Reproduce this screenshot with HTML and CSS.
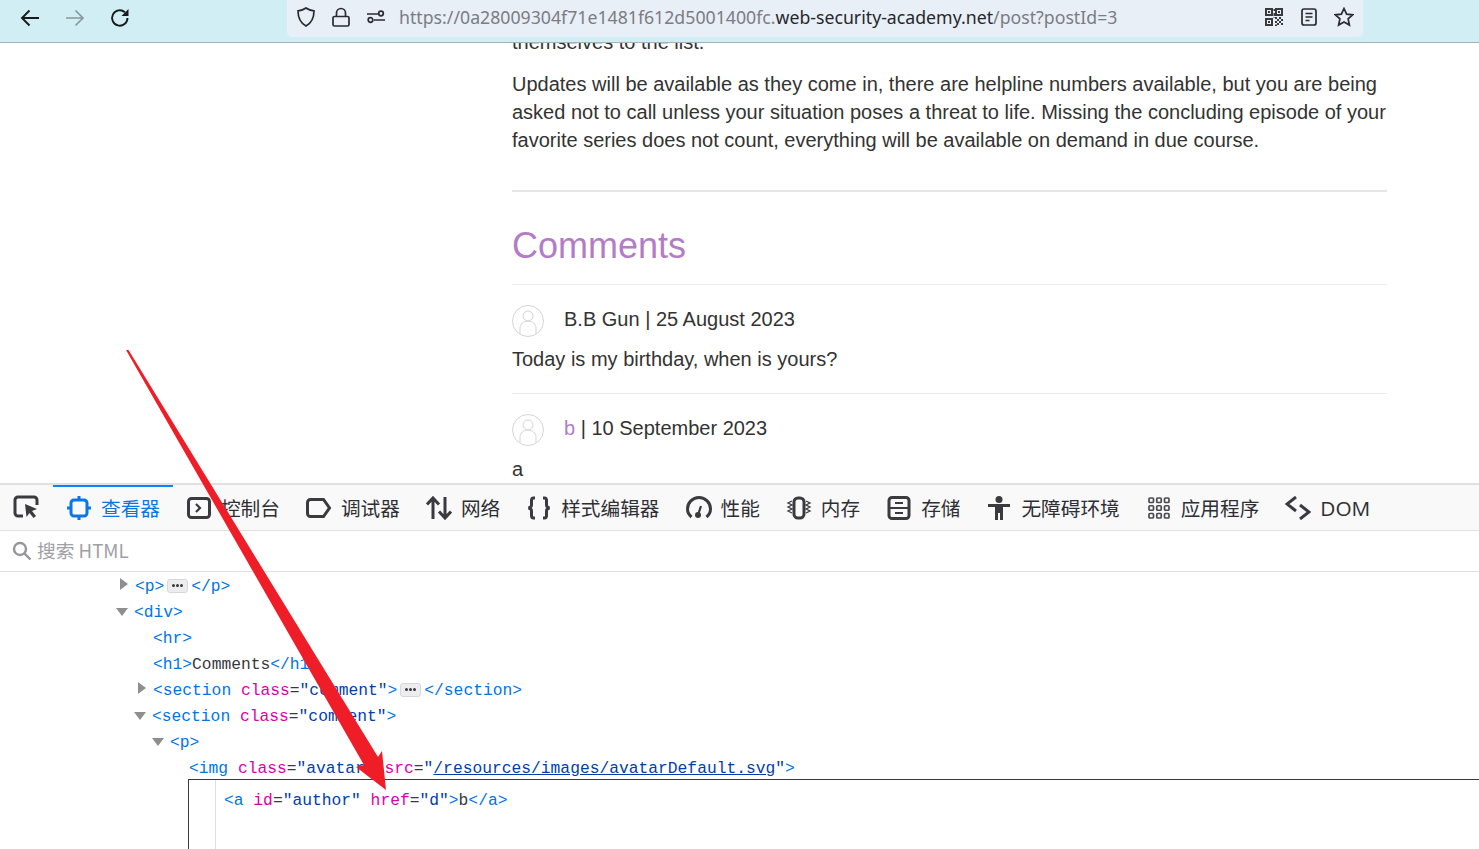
FILE: index.html
```html
<!DOCTYPE html>
<html lang="zh">
<head>
<meta charset="utf-8">
<title>Comments</title>
<link rel="stylesheet" href="styles.css">
</head>
<body>
<div class="app">
  <header class="toolbar">
    <nav class="nav">
      <svg class="nav-icon" viewBox="0 0 20 20"><path d="M19 10H2M9.500 2.500 2 10l7.500 7.500" class="st-dark"/></svg>
      <svg class="nav-icon" viewBox="0 0 20 20"><path d="M1 10h17M10.500 2.500 18 10l-7.500 7.500" class="st-muted"/></svg>
      <svg class="nav-icon" viewBox="0 0 20 20"><path d="M17.500 10a7.700 7.700 0 1 1-2.600-5.800" class="st-dark"/><path d="M18.500 1v7h-7z" class="fill-dark"/></svg>
    </nav>
    <div class="urlbar">
      <svg class="url-icon" viewBox="0 0 20 20"><path d="M10 1c2.500 1.800 5 2.600 8 2.800 0 7-2 12-8 15.200C4 15.800 2 10.800 2 3.800 5 3.600 7.500 2.800 10 1z" class="st-thin"/></svg>
      <svg class="url-icon" viewBox="0 0 20 20"><path d="M3.500 9.500h13a1.500 1.500 0 0 1 1.500 1.500v6.500a1.500 1.500 0 0 1-1.500 1.500h-13A1.500 1.500 0 0 1 2 17.500V11a1.500 1.500 0 0 1 1.500-1.500zM5.500 9.500V6a4.500 4.500 0 0 1 9 0v3.500" class="st-thin lock"/></svg>
      <svg class="url-icon" viewBox="0 0 20 20"><circle cx="15" cy="6.500" r="2.300" class="st-thin"/><circle cx="4.500" cy="13" r="2.300" class="st-thin"/><path d="M1 7h11M8 13h11" class="st-thin"/></svg>
      <div class="url"><span class="url-dim">https://0a28009304f71e1481f612d5001400fc.</span><span class="url-host">web-security-academy.net</span><span class="url-dim">/post?postId=3</span></div>
      <svg class="url-icon qr" viewBox="0 0 18 18"><path d="M0 0h8v8H0zM2 2v4h4V2zM10 0h8v8h-8zM12 2v4h4V2zM0 10h8v8H0zM2 12v4h4v-4zM3 3h2v2H3zM13 3h2v2h-2zM3 13h2v2H3zM8.500 1h1.500v2H8.500zM8.500 5h1.500v3H8.500zM10 9h2v2h-2zM14 9h2v2h-2zM8.500 9h1v1h-1zM12 11h2v2h-2zM16 11h2v2h-2zM10 13h2v2h-2zM14 13h2v2h-2zM12 15h2v2h-2zM16 15h2v2h-2zM10 16.500h2V18h-2z" class="fill-qr"/></svg>
      <svg class="url-icon reader" viewBox="0 0 18 20"><rect x="2" y="2" width="14" height="16" rx="2" class="st-thin"/><path d="M5.500 6.500h7M5.500 10h7M5.500 13.500h4" class="st-thin"/></svg>
      <svg class="url-icon star" viewBox="0 0 20 20"><path d="m10 1.500 2.600 5.600 6 .7-4.500 4.100 1.300 6.100L10 15l-5.400 3 1.300-6.100L1.400 7.800l6-.7z" class="st-thin"/></svg>
    </div>
  </header>

  <main class="viewport">
    <div class="post">
      <p class="para">themselves to the list.</p>
      <p class="para">Updates will be available as they come in, there are helpline numbers available, but you are being asked not to call unless your situation poses a threat to life. Missing the concluding episode of your favorite series does not count, everything will be available on demand in due course.</p>
      <hr class="rule">
      <h1 class="heading">Comments</h1>
      <section class="comment">
        <div class="byline">
          <svg class="avatar" viewBox="0 0 32 32"><circle cx="16" cy="16" r="15.500"/><circle cx="16" cy="11" r="5"/><path d="M8 29v-6c0-4 3.500-7 8-7s8 3 8 7v6"/></svg>
          <span class="byline-text">B.B Gun | 25 August 2023</span>
        </div>
        <p class="comment-text">Today is my birthday, when is yours?</p>
      </section>
      <section class="comment">
        <div class="byline">
          <svg class="avatar" viewBox="0 0 32 32"><circle cx="16" cy="16" r="15.500"/><circle cx="16" cy="11" r="5"/><path d="M8 29v-6c0-4 3.500-7 8-7s8 3 8 7v6"/></svg>
          <span class="byline-text"><a class="author">b</a> | 10 September 2023</span>
        </div>
        <p class="comment-text">a</p>
      </section>
    </div>
  </main>

  <section class="devtools">
    <div class="tabs">
      <div class="picker">
        <svg class="tab-icon" viewBox="0 0 26 24"><path d="M10 21H5a3 3 0 0 1-3-3V5a3 3 0 0 1 3-3h16a3 3 0 0 1 3 3v5" class="st-tab"/><path d="M12 9l12 5-5 2 4 5-2.500 2-4-5-3 4z" class="fill-tab"/></svg>
      </div>
      <div class="tab tab-active">
        <svg class="tab-icon" viewBox="0 0 24 24"><rect x="4" y="4" width="16" height="16" rx="3" class="st-blue"/><path d="M12 0v4M12 20v4M0 12h4M20 12h4" class="st-blue"/></svg>
        <span>查看器</span>
      </div>
      <div class="tab">
        <svg class="tab-icon" viewBox="0 0 24 24"><rect x="1.500" y="2.500" width="21" height="19" rx="3" class="st-tab"/><path d="m9 8 4 4-4 4" class="st-tab-thin"/></svg>
        <span>控制台</span>
      </div>
      <div class="tab">
        <svg class="tab-icon tab-icon-wide" viewBox="0 0 26 24"><path d="M4.500 3.500h13l6 8.500-6 8.500h-13a3 3 0 0 1-3-3v-11a3 3 0 0 1 3-3z" class="st-tab"/></svg>
        <span>调试器</span>
      </div>
      <div class="tab">
        <svg class="tab-icon tab-icon-wide" viewBox="0 0 26 24"><path d="M7 23V2M1 8.500 7 2l6 6.500M19 1v21M13 15.500l6 6.500 6-6.500" class="st-tab"/></svg>
        <span>网络</span>
      </div>
      <div class="tab">
        <svg class="tab-icon" viewBox="0 0 24 24"><path d="M8 2H6.500C5 2 4.500 3 4.500 4.500V9c0 1.500-1 2.500-3 3 2 .5 3 1.500 3 3v4.500C4.500 21 5 22 6.500 22H8M16 2h1.500C19 2 19.500 3 19.500 4.500V9c0 1.500 1 2.500 3 3-2 .5-3 1.500-3 3v4.500c0 1.500-.5 2.500-2 2.500H16" class="st-tab"/></svg>
        <span>样式编辑器</span>
      </div>
      <div class="tab">
        <svg class="tab-icon tab-icon-wide" viewBox="0 0 26 24"><path d="M5.500 21C2.500 18.500 1.500 15.500 1.500 13a11.500 11.500 0 0 1 23 0c0 2.500-1 5.500-4 8" class="st-tab"/><circle cx="12" cy="19" r="3" class="fill-tab"/><path d="m12 19 3-9" class="st-tab-thin"/></svg>
        <span>性能</span>
      </div>
      <div class="tab">
        <svg class="tab-icon tab-icon-wide" viewBox="0 0 26 24"><rect x="8" y="2" width="10" height="20" rx="4" class="st-tab"/><path d="M6 5 2 7l4 2-4 2 4 2-4 2 4 2M20 5l4 2-4 2 4 2-4 2 4 2-4 2" class="st-tab-hair"/></svg>
        <span>内存</span>
      </div>
      <div class="tab">
        <svg class="tab-icon" viewBox="0 0 24 24"><rect x="2" y="1.500" width="20" height="21" rx="3" class="st-tab"/><path d="M2 12h20M8 7h8M8 17h8" class="st-tab-thin"/></svg>
        <span>存储</span>
      </div>
      <div class="tab">
        <svg class="tab-icon" viewBox="0 0 24 24"><circle cx="12" cy="3.500" r="3.500" class="fill-tab"/><path d="M1 8h22v3h-7v13h-3v-7h-2v7H8V11H1z" class="fill-tab"/></svg>
        <span>无障碍环境</span>
      </div>
      <div class="tab">
        <svg class="tab-icon" viewBox="0 0 24 24"><g class="st-tab-grid"><rect x="2" y="2" width="4.500" height="4.500" rx="1"/><rect x="9.750" y="2" width="4.500" height="4.500" rx="1"/><rect x="17.500" y="2" width="4.500" height="4.500" rx="1"/><rect x="2" y="9.750" width="4.500" height="4.500" rx="1"/><rect x="9.750" y="9.750" width="4.500" height="4.500" rx="1"/><rect x="17.500" y="9.750" width="4.500" height="4.500" rx="1"/><rect x="2" y="17.500" width="4.500" height="4.500" rx="1"/><rect x="9.750" y="17.500" width="4.500" height="4.500" rx="1"/><rect x="17.500" y="17.500" width="4.500" height="4.500" rx="1"/></g></svg>
        <span>应用程序</span>
      </div>
      <div class="tab">
        <svg class="tab-icon tab-icon-wide" viewBox="0 0 26 24"><path d="M11 1 2 8l9 7M15 9l9 7-9 7" class="st-tab"/></svg>
        <span class="dom">DOM</span>
      </div>
    </div>
    <div class="search">
      <svg class="search-icon" viewBox="0 0 20 20"><circle cx="8" cy="8" r="6"/><path d="m12.500 12.500 6 6"/></svg>
      <span>搜索 HTML</span>
    </div>
    <div class="markup">
      <div class="row d1"><i class="tw tw-closed"></i><span class="t">&lt;p&gt;</span><b class="more"><i class="dot"></i><i class="dot"></i><i class="dot"></i></b><span class="t">&lt;/p&gt;</span></div>
      <div class="row d1"><i class="tw tw-open"></i><span class="t">&lt;div&gt;</span></div>
      <div class="row d2"><span class="t">&lt;hr&gt;</span></div>
      <div class="row d2"><span class="t">&lt;h1&gt;</span>Comments<span class="t">&lt;/h1&gt;</span></div>
      <div class="row d2"><i class="tw tw-closed"></i><span class="t">&lt;section</span> <span class="n">class</span>=<span class="v">"comment"</span><span class="t">&gt;</span><b class="more"><i class="dot"></i><i class="dot"></i><i class="dot"></i></b><span class="t">&lt;/section&gt;</span></div>
      <div class="row d2"><i class="tw tw-open"></i><span class="t">&lt;section</span> <span class="n">class</span>=<span class="v">"comment"</span><span class="t">&gt;</span></div>
      <div class="row d3"><i class="tw tw-open"></i><span class="t">&lt;p&gt;</span></div>
      <div class="row d4"><span class="t">&lt;img</span> <span class="n">class</span>=<span class="v">"avatar"</span> <span class="n">src</span>=<span class="v">"<u class="lnk">/resources/images/avatarDefault.svg</u>"</span><span class="t">&gt;</span></div>
      <div class="editor">
        <div class="editor-code"><span class="t">&lt;a</span> <span class="n">id</span>=<span class="v">"author"</span> <span class="n">href</span>=<span class="v">"d"</span><span class="t">&gt;</span>b<span class="t">&lt;/a&gt;</span></div>
      </div>
    </div>
  </section>

  <svg class="annotation" viewBox="0 0 1479 849" width="1479" height="849"><polygon points="126,350 128.500,350 378,757 382,751 386,790 356,767 364,765"/></svg>
</div>
</body>
</html>
```

FILE: styles.css
```css
* { box-sizing: border-box; }
html, body { margin: 0; padding: 0; height: 849px; overflow: hidden; background: #fff; }
.app { position: relative; width: 1479px; height: 849px; display: flex; flex-direction: column; overflow: hidden; font-family: "Liberation Sans", Arial, sans-serif; }

/* browser toolbar */
.toolbar { flex: none; height: 43px; display: flex; align-items: flex-start; background: #d0eef3; border-bottom: 1px solid #a3b1b8; }
.nav { width: 287px; display: flex; gap: 25px; padding: 8px 0 0 20px; }
.nav-icon { width: 20px; height: 20px; flex: none; }
.urlbar { width: 1076px; height: 37px; display: flex; align-items: center; background: #e8eff6; border-radius: 0 0 5px 5px; padding: 0 0 3px 9px; }
.url-icon { width: 20px; height: 20px; flex: none; margin-right: 15px; }
.url { flex: 1; font-family: "Noto Sans", sans-serif; font-size: 17.720px; white-space: nowrap; margin: 0 0 0 -2px; }
.url-dim { color: #7c7c84; }
.url-host { color: #27272b; }
.qr { width: 18px; height: 18px; margin-right: 17px; }
.reader { width: 18px; margin-right: 16px; }
.star { margin-right: 9px; }

.st-dark { fill: none; stroke: #1a1a1c; stroke-width: 1.900; }
.st-muted { fill: none; stroke: #8b979c; stroke-width: 1.700; }
.fill-dark { fill: #1a1a1c; }
.st-thin { fill: none; stroke: #2b2b30; stroke-width: 1.700; }
.fill-qr { fill: #3a3a3e; }
.st-tab { fill: none; stroke: #3b3b3f; stroke-width: 3; }
.st-tab-thin { fill: none; stroke: #3b3b3f; stroke-width: 2.200; }
.st-tab-grid { fill: none; stroke: #4a4a4f; stroke-width: 1.700; }
.st-tab-hair { fill: none; stroke: #3b3b3f; stroke-width: 1.300; }
.fill-tab { fill: #3b3b3f; }
.st-blue { fill: none; stroke: #0a74e8; stroke-width: 3; }

/* page content */
.viewport { flex: none; height: 440px; overflow: hidden; background: #fff; color: #333332; font-size: 20px; line-height: 28px; }
.post { width: 875px; margin: -15px 0 0 512px; }
.para { margin: 0 0 14px; }
.rule { height: 2px; border: 0; background: #e6e6e6; margin: 36px 0 31px; }
.heading { margin: 0 0 15px; font-size: 36px; line-height: 46px; font-weight: 400; color: #b37cc8; }
.comment { border-top: 1px solid #ebebeb; padding: 20px 0 20px; }
.byline { display: flex; align-items: center; gap: 20px; height: 32px; }
.byline-text { margin-top: -4px; }
.avatar { width: 32px; height: 32px; flex: none; fill: none; stroke: #d3d6d6; stroke-width: 1; }
.comment-text { margin: 8px 0 0; }
.comment + .comment .comment-text { margin-top: 9px; }
.author { color: #b37cc8; }

/* devtools */
.devtools { flex: 1; min-height: 0; display: flex; flex-direction: column; overflow: hidden; background: #fff; }
.tabs { flex: none; height: 48px; display: flex; align-items: stretch; background: #f9f9fa; border-top: 2px solid #e0e0e2; border-bottom: 1px solid #e0e0e2; color: #2f2f33; font-family: "Noto Sans CJK SC", sans-serif; font-size: 19.670px; }
.picker { width: 53px; padding: 10px 0 0 13px; }
.picker .tab-icon { width: 26px; height: 24px; }
.tab { display: flex; align-items: center; gap: 10px; padding: 0 13px 0 14px; position: relative; }
.tab-icon { width: 24px; height: 24px; flex: none; }
.tab-icon-wide { width: 26px; margin: 0 -1px; }
.tab-active { color: #0a74e8; box-shadow: inset 0 2px 0 #0a84ff; }
.dom { font-family: "Open Sans", sans-serif; font-size: 20.800px; }
.search { flex: none; height: 41px; display: flex; align-items: center; gap: 5px; padding: 0 0 3px 12px; border-bottom: 1px solid #e0e0e2; color: #a0a0a4; font-family: "Noto Sans CJK SC", sans-serif; font-size: 18.700px; }
.search-icon { width: 20px; height: 20px; margin-top: 3px; fill: none; stroke: #95959a; stroke-width: 2.400; }
.markup { flex: 1; min-height: 0; padding-top: 2px; font-family: "Liberation Mono", monospace; font-size: 16.300px; color: #38383d; }
.row { height: 26px; line-height: 26px; white-space: pre; }
.d1 { padding-left: 135px; }
.d2 { padding-left: 153px; }
.d3 { padding-left: 171px; }
.d4 { padding-left: 189px; }
.tw { display: inline-block; width: 0; height: 0; vertical-align: 1px; }
.tw-closed { margin-left: -15px; margin-right: 7px; border-left: 8px solid #8e8e92; border-top: 6.500px solid transparent; border-bottom: 6.500px solid transparent; }
.tw-open { margin-left: -19px; margin-right: 6px; border-top: 8px solid #8e8e92; border-left: 6.500px solid transparent; border-right: 6.500px solid transparent; }
.t { color: #0074e8; }
.n { color: #dd00a9; }
.v { color: #003eaa; }
.lnk { text-decoration: underline; }
.more { display: inline-flex; align-items: center; justify-content: center; gap: 1px; width: 21px; height: 14px; margin: 0 3px; border: 1px solid #d7d7db; border-radius: 3px; background: #ededf0; vertical-align: -1px; position: relative; top: -5px; }
.dot { width: 3px; height: 3px; border-radius: 50%; background: #38383d; }
.editor { height: 80px; margin: -3px 0 0 188px; border-top: 1px solid #38383d; border-left: 1px solid #38383d; }
.editor-code { height: 100%; margin-left: 26px; padding-left: 8px; border-left: 1px solid #e0e0e2; line-height: 26px; padding-top: 8px; white-space: pre; }

/* hand-drawn annotation on top of the screenshot */
.annotation { position: absolute; left: 0; top: 0; pointer-events: none; }
.annotation polygon { fill: #ee1d27; }
```
